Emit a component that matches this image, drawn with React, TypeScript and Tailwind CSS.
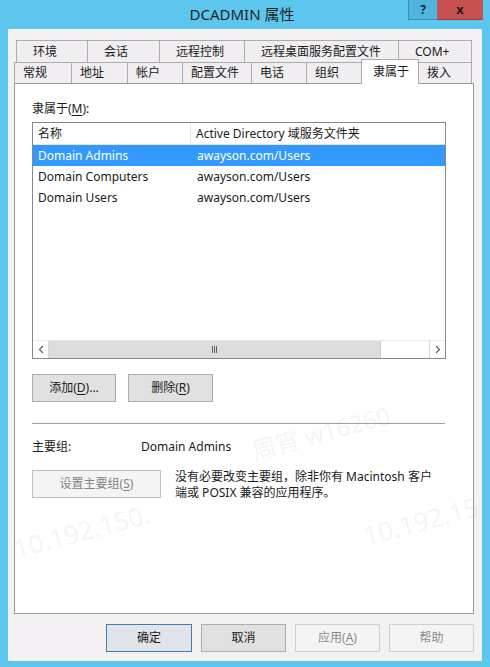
import React from "react";

const F = { fontFamily: '"Noto Sans", "Noto Sans CJK SC", sans-serif' } as React.CSSProperties;

function U({ c }: { c: string }) {
  return <span className="underline underline-offset-2">{c}</span>;
}

const upperTabs: [string, number][] = [
  ["环境", 72],
  ["会话", 72],
  ["远程控制", 85],
  ["远程桌面服务配置文件", 154],
  ["COM+", 73],
];
const lowerTabs: [string, number][] = [
  ["常规", 58],
  ["地址", 56],
  ["帐户", 55],
  ["配置文件", 69],
  ["电话", 55],
  ["组织", 54],
  ["隶属于", 58],
  ["拨入", 53],
];

const rows = [
  ["Domain Admins", "awayson.com/Users"],
  ["Domain Computers", "awayson.com/Users"],
  ["Domain Users", "awayson.com/Users"],
];

export default function App() {
  return (
    <div
      className="relative w-[490px] h-[667px] bg-[#5cc6ee] flex flex-col overflow-hidden text-[12px] text-[#1a1a1a]"
      style={F}
    >
      {/* title bar */}
      <div className="h-[29px] shrink-0 flex items-start">
        <div className="flex-1 h-[29px] flex items-center justify-center pl-[76px] text-[15px] text-[#1f1f1f]">
          DCADMIN 属性
        </div>
        <div className="flex mr-[7px]">
          <div className="w-[29px] h-[20px] bg-[#4fb5dc] border-l border-b border-[#3f8fb3] flex items-center justify-center text-[12px] font-bold text-[#1f2a44]">
            ?
          </div>
          <div className="w-[46px] h-[20px] bg-[#c75050] border-b border-[#a33c3c] flex items-center justify-center text-[13px] font-bold text-[#2a1a1a]">
            x
          </div>
        </div>
      </div>

      {/* body */}
      <div className="mx-[8px] w-[474px] h-[632px] bg-[#f3f1f4] flex flex-col">
        {/* tabs */}
        <div className="mt-[11px] ml-[8px] flex h-[22px]">
          {upperTabs.map(([t, w], i) => (
            <div
              key={t}
              className={`h-[22px] border-t border-[#acacac] border-r flex items-center pl-[16px] bg-[#f0eef1] ${i === 0 ? "border-l" : ""}`}
              style={{ width: w }}
            >
              {t}
            </div>
          ))}
        </div>
        <div className="ml-[6px] flex h-[21px] relative z-10">
          {lowerTabs.map(([t, w], i) => {
            const sel = t === "隶属于";
            return sel ? (
              <div
                key={t}
                className="h-[25px] -mt-[3px] -mb-[1px] bg-white border-t border-l border-r border-[#acacac] flex items-start pt-[3px] pl-[11px]"
                style={{ width: w }}
              >
                {t}
              </div>
            ) : (
              <div
                key={t}
                className={`h-[21px] border-t border-[#acacac] ${i === 0 ? "border-l" : ""} ${lowerTabs[i + 1]?.[0] === "隶属于" ? "" : "border-r"} flex items-center pl-[8px] bg-[#f0eef1]`}
                style={{ width: w }}
              >
                {t}
              </div>
            );
          })}
        </div>

        {/* panel */}
        <div className="ml-[6px] w-[460px] h-[531px] bg-white border border-[#9a9a9a] flex flex-col pl-[17px] pt-[17px]">
          <div className="h-[16px] leading-[16px]">
            隶属于(<U c="M" />):
          </div>
          <div className="mt-[5px] w-[414px] h-[237px] border border-[#828790] flex flex-col">
            <div className="h-[22px] flex border-b border-[#e5e5e5]">
              <div className="w-[158px] border-r border-[#e5e5e5] pl-[5px] flex items-center">名称</div>
              <div className="flex-1 pl-[5px] flex items-center">Active Directory 域服务文件夹</div>
            </div>
            <div className="flex-1 flex flex-col">
              {rows.map(([a, b], i) => (
                <div
                  key={a}
                  className={`h-[21px] flex items-center ${i === 0 ? "bg-[#3399ff] text-white" : ""}`}
                >
                  <div className="w-[159px] pl-[5px]">{a}</div>
                  <div className="flex-1 pl-[5px]">{b}</div>
                </div>
              ))}
            </div>
            <div className="h-[18px] flex bg-white border-t border-[#e9e9e9]">
              <div className="w-[16px] border-r border-[#d6d6d6] flex items-center justify-center text-[#606060]">
                <svg width="6" height="9" viewBox="0 0 6 9">
                  <path d="M5 1 L1.5 4.5 L5 8" stroke="#606060" strokeWidth="1.2" fill="none" />
                </svg>
              </div>
              <div className="w-[332px] bg-[#dcdcdc] border-r border-[#cfcfcf] flex items-center justify-center">
                <div className="flex gap-[1px]">
                  <div className="w-[1px] h-[7px] bg-[#606060]" />
                  <div className="w-[1px] h-[7px] bg-[#606060]" />
                  <div className="w-[1px] h-[7px] bg-[#606060]" />
                </div>
              </div>
              <div className="flex-1" />
              <div className="w-[16px] border-l border-[#d6d6d6] flex items-center justify-center">
                <svg width="6" height="9" viewBox="0 0 6 9">
                  <path d="M1 1 L4.5 4.5 L1 8" stroke="#606060" strokeWidth="1.2" fill="none" />
                </svg>
              </div>
            </div>
          </div>

          <div className="mt-[15px] flex gap-[12px]">
            <button className="w-[84px] h-[28px] bg-[#e1e1e1] border border-[#adadad] flex items-center justify-center">
              添加(<U c="D" />)...
            </button>
            <button className="w-[85px] h-[28px] bg-[#e1e1e1] border border-[#adadad] flex items-center justify-center">
              删除(<U c="R" />)
            </button>
          </div>

          <div className="mt-[21px] w-[413px] h-[1px] bg-[#a0a0a0]" />

          <div className="mt-[15px] h-[16px] leading-[16px] flex">
            <div className="w-[109px]">主要组:</div>
            <div>Domain Admins</div>
          </div>

          <div className="mt-[15px] flex">
            <button className="w-[129px] h-[28px] bg-[#f4f4f4] border border-[#bfbfbf] text-[#838383] flex items-center justify-center">
              设置主要组(<U c="S" />)
            </button>
            <div className="ml-[14px] -mt-[1px] leading-[16px] w-[280px]">
              没有必要改变主要组，除非你有 Macintosh 客户
              <br />
              端或 POSIX 兼容的应用程序。
            </div>
          </div>
        </div>

        {/* bottom buttons */}
        <div className="mt-[10px] flex justify-end gap-[9px] pr-[8px]">
          <button className="w-[86px] h-[28px] bg-[#e1e4e8] border border-[#3c7fb1] flex items-center justify-center">
            确定
          </button>
          <button className="w-[85px] h-[28px] bg-[#e1e1e1] border border-[#adadad] flex items-center justify-center">
            取消
          </button>
          <button className="w-[85px] h-[28px] bg-[#f4f4f4] border border-[#cfcfcf] text-[#8a8a8a] flex items-center justify-center">
            应用(<U c="A" />)
          </button>
          <button className="w-[85px] h-[28px] bg-[#f4f4f4] border border-[#cfcfcf] text-[#8a8a8a] flex items-center justify-center">
            帮助
          </button>
        </div>
      </div>

      {/* faint watermark */}
      <div className="pointer-events-none absolute left-[12px] top-[512px] -rotate-[15deg] text-[26px] text-[#000] opacity-[0.04]">
        10.192.150.
      </div>
      <div className="pointer-events-none absolute left-[362px] top-[502px] -rotate-[15deg] text-[26px] text-[#000] opacity-[0.04]">
        10.192.15
      </div>
      <div className="pointer-events-none absolute left-[250px] top-[415px] -rotate-[15deg] text-[24px] text-[#000] opacity-[0.04]">
        周宵 w16260
      </div>
    </div>
  );
}
